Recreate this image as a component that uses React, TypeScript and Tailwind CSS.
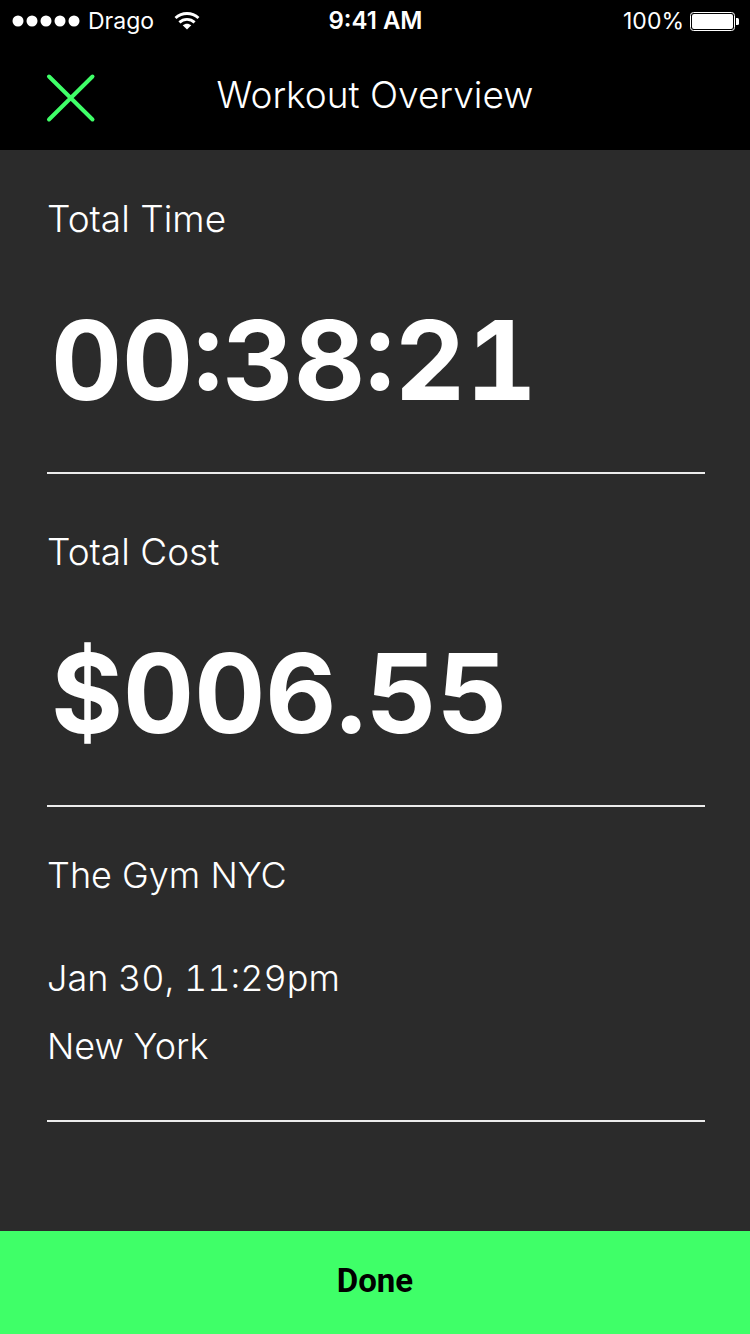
import type { ReactNode } from "react";

function StatusBar() {
  return (
    <div className="grid h-10 grid-cols-3 items-center pl-3 pr-[11px] text-[23px] leading-[42px] text-white">
      <div className="flex items-center">
        <svg viewBox="0 0 68 12" className="h-3 w-[68px]" fill="currentColor" aria-hidden="true">
          {[6, 20, 34, 48, 62].map((cx) => (
            <circle key={cx} cx={cx} cy="6" r="5.5" />
          ))}
        </svg>
        <span className="ml-2">Drago</span>
        <svg viewBox="0 0 26 19" className="ml-5 h-[19px] w-[26px]" aria-hidden="true">
          <path d="M1.5 6C8 0 18 0 24.5 6" fill="none" stroke="currentColor" strokeWidth="2.9" />
          <path d="M5.4 10.4C9.7 6.4 16.3 6.4 20.6 10.4" fill="none" stroke="currentColor" strokeWidth="2.9" />
          <path d="M13 17.5L8.7 13.3C11.2 11.1 14.8 11.1 17.3 13.3Z" fill="currentColor" />
        </svg>
      </div>
      <div className="text-center text-[24px] font-semibold">9:41 AM</div>
      <div className="flex items-center justify-end gap-1.5">
        <span>100%</span>
        <svg viewBox="0 0 49 19" className="h-[19px] w-[49px]" aria-hidden="true">
          <rect x="0.5" y="0.5" width="44" height="18" rx="3" fill="none" stroke="currentColor" />
          <rect x="2" y="2" width="41" height="15" rx="2" fill="currentColor" />
          <path d="M46 6h1.500q1.500 0 1.500 1.500v4q0 1.500-1.500 1.500H46z" fill="currentColor" />
        </svg>
      </div>
    </div>
  );
}

function Label({ children }: { children: ReactNode }) {
  return <h2 className="text-[37px] font-light leading-[50px]">{children}</h2>;
}

function Stat({ label, value }: { label: string; value: string }) {
  return (
    <section className="border-b-2 border-[#ececec] pb-11">
      <Label>{label}</Label>
      <p className="mt-12 pl-1 text-[110px] font-bold leading-[136px] tabular-nums">{value}</p>
    </section>
  );
}

export default function App() {
  return (
    <div className="flex min-h-screen flex-col bg-[#2b2b2b] font-['Inter','Noto_Sans',sans-serif] text-white">
      <header className="bg-black">
        <StatusBar />
        <div className="grid h-[110px] grid-cols-[96px_1fr_96px] items-start">
          <button type="button" aria-label="Close" className="ml-[46px] mt-[33px] w-[50px] text-[#3fff68]">
            <svg viewBox="0 0 50 50" className="size-[50px]" fill="none" stroke="currentColor" strokeWidth="4" strokeLinecap="round" aria-hidden="true">
              <path d="M3 3.5L46.5 46.5M46.5 3.5L3 46.5" />
            </svg>
          </button>
          <h1 className="mt-[31px] text-center text-[37px] font-light leading-[48px]">Workout Overview</h1>
        </div>
      </header>
      <main className="flex grow flex-col pl-[47px] pr-[45px] pt-11">
        <div className="flex flex-col gap-[53px]">
          <Stat label="Total Time" value="00:38:21" />
          <Stat label="Total Cost" value="$006.55" />
        </div>
        <section className="border-b-2 border-[#ececec] pb-10 pt-[43px] text-[36px] font-light">
          <h2 className="leading-[50px]">The Gym NYC</h2>
          <p className="mt-11 leading-[68px] tabular-nums">
            Jan 30, 11:29pm
            <br />
            New York
          </p>
        </section>
      </main>
      <button
        type="button"
        className="h-[103px] w-full bg-[#3fff68] pb-1 font-['Roboto','Noto_Sans',sans-serif] text-[33px] font-bold text-black"
      >
        Done
      </button>
    </div>
  );
}
